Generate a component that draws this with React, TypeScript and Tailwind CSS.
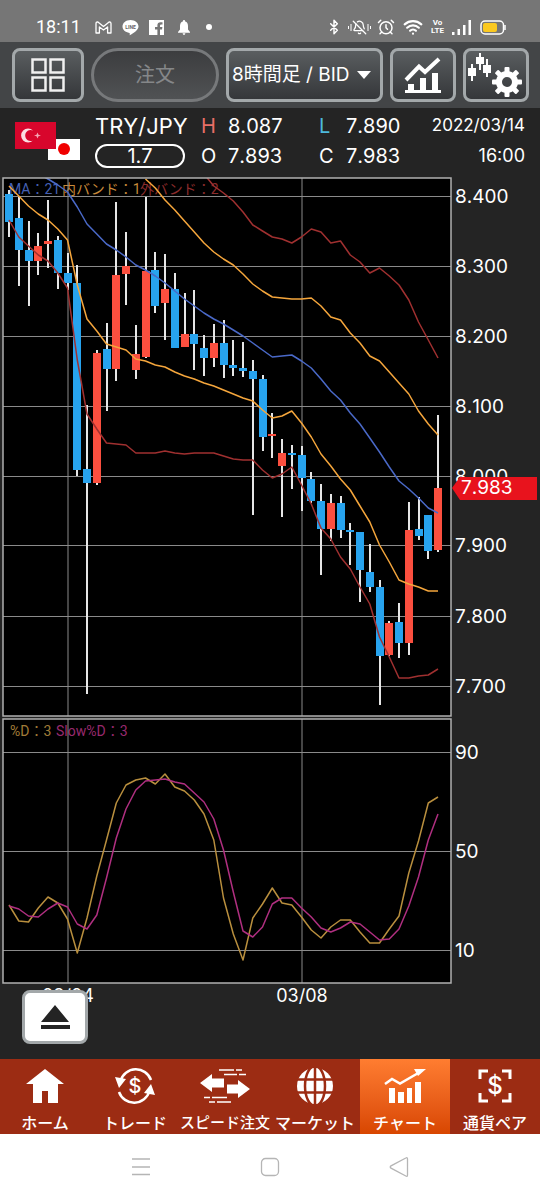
import type { ReactNode } from "react";
import { AlarmClock, BellOff, Bluetooth, Wifi } from "lucide-react";

const FIRST_X = 9;
const LAST_X = 438;
const COUNT = 45;

const RED = "#fb4f3f";
const BLUE = "#27a3ee";

type Candle = [high: number, top: number, bottom: number, low: number, up: boolean];

// high, body top, body bottom, low, rising
const CANDLES: Candle[] = [
  [190, 194, 222, 237, false],
  [197, 218, 250, 286, false],
  [221, 250, 261, 306, false],
  [233, 246, 261, 275, true],
  [200, 241, 244, 268, true],
  [236, 240, 273, 289, false],
  [253, 273, 283, 290, false],
  [265, 283, 470, 476, false],
  [405, 469, 483, 694, false],
  [350, 353, 483, 485, true],
  [323, 349, 369, 411, false],
  [202, 275, 369, 381, true],
  [232, 266, 274, 305, true],
  [325, 354, 370, 379, true],
  [197, 271, 357, 358, true],
  [252, 270, 306, 313, false],
  [254, 289, 303, 340, true],
  [273, 289, 348, 348, false],
  [293, 334, 347, 347, true],
  [290, 334, 344, 370, false],
  [335, 348, 358, 376, false],
  [324, 343, 358, 367, true],
  [320, 343, 365, 378, false],
  [340, 365, 368, 376, false],
  [342, 368, 371, 377, false],
  [360, 371, 379, 515, false],
  [375, 379, 437, 451, false],
  [413, 434, 436, 458, true],
  [439, 453, 466, 517, true],
  [445, 453, 455, 489, false],
  [446, 455, 478, 511, false],
  [472, 479, 501, 503, false],
  [484, 501, 529, 575, false],
  [494, 503, 529, 541, true],
  [496, 503, 530, 538, false],
  [523, 530, 532, 565, false],
  [532, 532, 570, 602, false],
  [544, 572, 587, 592, false],
  [580, 587, 656, 705, false],
  [621, 623, 655, 656, true],
  [603, 622, 643, 658, false],
  [502, 530, 643, 655, true],
  [497, 529, 536, 540, false],
  [515, 515, 551, 559, false],
  [415, 488, 550, 552, true],
];

type Series = { color: string; from?: number; ys: number[] };

const BANDS: Series[] = [
  {
    color: "#a03030",
    from: 20,
    ys: [174, 186, 193, 201, 212, 225, 231, 237, 239, 243, 237, 229, 232, 243, 241, 255, 262, 273, 268, 276, 285, 300, 322, 340, 358],
  },
  {
    color: "#a03030",
    ys: [
      220, 237, 246, 255, 261, 273, 288, 360, 414, 429, 443, 444, 445, 453, 453, 453, 451, 453, 454, 453, 453, 453, 456,
      459, 460, 460, 470, 478, 474, 467, 485, 504, 528, 539, 557, 569, 587, 604, 637, 657, 678, 678, 676, 675, 669,
    ],
  },
  {
    color: "#f5a63c",
    from: 14,
    ys: [
      179, 188, 200, 210, 221, 232, 243, 252, 259, 265, 274, 284, 291, 297, 298, 299, 299, 298, 306, 317, 320, 333, 343,
      356, 361, 372, 383, 394, 411, 424, 435,
    ],
  },
  {
    color: "#f5a63c",
    ys: [
      186, 196, 206, 214, 220, 229, 240, 285, 319, 331, 344, 347, 350, 359, 361, 365, 367, 372, 376, 379, 383, 386, 390,
      394, 398, 401, 410, 418, 416, 411, 423, 437, 454, 466, 479, 490, 506, 522, 545, 562, 580, 584, 587, 591, 591,
    ],
  },
  {
    color: "#4a69c8",
    from: 3,
    ys: [
      174, 179, 185, 192, 207, 224, 234, 244, 250, 257, 265, 270, 276, 283, 291, 299, 306, 313, 319, 324, 330, 336, 343,
      350, 357, 356, 355, 361, 368, 379, 391, 400, 413, 424, 438, 452, 467, 481, 489, 498, 508, 513,
    ],
  },
];

const STOCHASTICS: Series[] = [
  {
    color: "#b98f3e",
    ys: [
      905, 921, 922, 908, 897, 903, 919, 953, 918, 876, 840, 803, 785, 780, 778, 784, 774, 787, 791, 800, 814, 840, 898,
      934, 960, 918, 904, 888, 903, 905, 917, 930, 938, 927, 920, 920, 932, 943, 943, 929, 916, 873, 841, 803, 797,
    ],
  },
  {
    color: "#b02f80",
    ys: [
      906, 909, 916, 917, 909, 903, 907, 924, 929, 915, 878, 838, 809, 790, 781, 780, 779, 782, 784, 793, 802, 819, 850,
      892, 931, 937, 927, 904, 898, 898, 908, 917, 928, 932, 928, 922, 924, 932, 940, 939, 929, 906, 877, 840, 814,
    ],
  },
];

const PRICE_TICKS = [
  { y: 196, label: "8.400" },
  { y: 266, label: "8.300" },
  { y: 336, label: "8.200" },
  { y: 406, label: "8.100" },
  { y: 476, label: "8.000" },
  { y: 545, label: "7.900" },
  { y: 616, label: "7.800" },
  { y: 686, label: "7.700" },
];

const OSC_TICKS = [
  { y: 752, label: "90" },
  { y: 851, label: "50" },
  { y: 950, label: "10" },
];

const DATE_TICKS = [
  { x: 68, label: "03/04" },
  { x: 302, label: "03/08" },
];

function xAt(i: number) {
  return FIRST_X + ((LAST_X - FIRST_X) * i) / (COUNT - 1);
}

function Line({ series }: { series: Series }) {
  const from = series.from ?? 0;
  const points = series.ys.map((y, i) => `${xAt(from + i).toFixed(1)},${y}`).join(" ");
  return <polyline points={points} fill="none" stroke={series.color} strokeWidth="1.5" strokeLinejoin="round" />;
}

function Chart() {
  return (
    <svg
      viewBox="0 177 540 882"
      className="block w-full font-['Inter','Noto_Sans_CJK_JP',sans-serif]"
      role="img"
      aria-label="TRY/JPY 8時間足"
    >
      <defs>
        <clipPath id="price-clip">
          <rect x="3" y="178" width="449" height="538" />
        </clipPath>
      </defs>

      <rect x="3" y="178" width="448" height="538" fill="#000" />
      <rect x="3" y="719" width="448" height="264" fill="#000" />

      <g fontSize="14" className="font-['Roboto','Noto_Sans_CJK_JP',sans-serif]">
        <text x="9" y="194" fill="#4560b4">MA：21</text>
        <text x="62" y="194" fill="#c98a3a">内バンド：1</text>
        <text x="140" y="194" fill="#8c2c2c">外バンド：2</text>
        <text x="10" y="736" fill="#a07c38">%D：3</text>
        <text x="56" y="736" fill="#98296e">Slow%D：3</text>
      </g>

      <g stroke="#8a8a8a" strokeWidth="1">
        {[...PRICE_TICKS, ...OSC_TICKS].map((t) => (
          <line key={t.y} x1="3" x2="451" y1={t.y + 0.5} y2={t.y + 0.5} />
        ))}
        {DATE_TICKS.map((t) => (
          <path key={t.x} d={`M${t.x} 178V716M${t.x} 719V983`} />
        ))}
      </g>

      <g clipPath="url(#price-clip)">
        {CANDLES.map(([high, top, bottom, low, up], i) => {
          const x = Math.round(xAt(i));
          return (
            <g key={i}>
              <rect x={x - 1} y={high} width="2" height={low - high} fill="#e6e6e6" />
              <rect x={x - 4} y={top} width="8" height={bottom - top} fill={up ? RED : BLUE} />
            </g>
          );
        })}
        {BANDS.map((s, i) => (
          <Line key={i} series={s} />
        ))}
      </g>
      {STOCHASTICS.map((s) => (
        <Line key={s.color} series={s} />
      ))}

      <g fill="none" stroke="#b0b0b0" strokeWidth="1.5">
        <rect x="3" y="178" width="448" height="538" />
        <rect x="3" y="719" width="448" height="264" />
      </g>

      <g fill="#fff" fontSize="19" className="[font-kerning:none]">
        {[...PRICE_TICKS, ...OSC_TICKS].map((t) => (
          <text key={t.y} x="455" y={t.y + 7}>
            {t.label}
          </text>
        ))}
        {DATE_TICKS.map((t) => (
          <text key={t.x} x={t.x} y="1002" fontSize="18" textAnchor="middle">
            {t.label}
          </text>
        ))}
      </g>

      <path d="M452 488 460 477H537V500H460Z" fill="#e8131d" />
      <text x="461" y="494" fontSize="19" fill="#fff" className="[font-kerning:none]">
        7.983
      </text>
    </svg>
  );
}

function StatusBar() {
  return (
    <div className="flex h-[42px] items-end justify-between bg-[#767676] pr-[34px] pb-[5px] pl-9 text-white">
      <div className="flex items-center">
        <span className="w-[59px] font-['Roboto',sans-serif] text-lg leading-5">18:11</span>
        <svg width="17" height="13" viewBox="0 0 17 13" fill="none" stroke="#fff" strokeWidth="1.3" aria-hidden="true">
          <path d="M1 12V2.5Q1 .8 2.6.8L8.5 5.5 14.4.8Q16 .8 16 2.5V12H12.6V6L8.5 9 4.4 6V12Z" strokeLinejoin="round" />
        </svg>
        <svg width="17" height="17" viewBox="0 0 17 17" className="ml-2.5" aria-hidden="true">
          <path d="M8.5 1C4 1 .5 3.9.5 7.5c0 3.3 2.8 5.8 6.9 6.4.6.1.3 1.1.3 2.3 3.8-1.8 8.8-5.2 8.8-8.7C16.5 3.9 13 1 8.5 1Z" fill="#fff" />
          <text x="8.5" y="9.5" fontSize="5" fontWeight="700" textAnchor="middle" fill="#666" className="font-['Roboto',sans-serif]">
            LINE
          </text>
        </svg>
        <svg width="15" height="15" viewBox="0 0 15 15" className="ml-2.5" aria-hidden="true">
          <path d="M0 0H15V15H11V9.5h2l.4-2.5H11V5.7Q11 4.5 12.2 4.5H13.5V2.2H11.5Q8.4 2.2 8.4 5.3V7H6V9.5H8.4V15H0Z" fill="#fff" />
        </svg>
        <svg width="12" height="15" viewBox="0 0 12 15" className="ml-3.5" aria-hidden="true">
          <path d="M6 0Q7.2 0 7.2 1.4 10 2.3 10 6V9.5L12 12V12.7H0V12L2 9.5V6Q2 2.3 4.8 1.4 4.8 0 6 0ZM4.6 13.3H7.4Q7.2 15 6 15T4.6 13.3Z" fill="#fff" />
        </svg>
        <span className="ml-4 size-1.5 rounded-full bg-white" />
      </div>

      <div className="flex items-center">
        <Bluetooth width={16} height={18} strokeWidth={2.2} aria-hidden />
        <span className="ml-1.5 flex items-center">
          <svg width="4" height="9" viewBox="0 0 4 9" stroke="#fff" aria-hidden="true">
            <path d="M.5 3V6M3 1V8" />
          </svg>
          <BellOff className="size-[15px]" strokeWidth={2} aria-hidden />
          <svg width="4" height="9" viewBox="0 0 4 9" stroke="#fff" aria-hidden="true">
            <path d="M3.5 3V6M1 1V8" />
          </svg>
        </span>
        <AlarmClock className="ml-1.5 size-[18px]" strokeWidth={2} aria-hidden />
        <Wifi className="ml-2 size-[20px]" strokeWidth={2.6} aria-hidden />
        <span className="ml-2 flex flex-col items-center font-['Roboto',sans-serif] text-[8px] leading-[8px] font-bold">
          <span>Vo</span>
          <span>LTE</span>
        </span>
        <svg width="20" height="16" viewBox="0 0 20 16" className="ml-2" aria-hidden="true">
          <path d="M0 13H2.5V16H0ZM5.5 10H8V16H5.5ZM11 6H13.5V16H11ZM16.5 1H19V16H16.5Z" fill="#fff" />
        </svg>
        <svg width="26" height="15" viewBox="0 0 26 15" className="ml-2" aria-hidden="true">
          <rect x="1" y="1" width="22.5" height="13" rx="4" fill="none" stroke="#fff" strokeWidth="1.5" />
          <rect x="3" y="3" width="14" height="9" rx="2" fill="#fbc920" />
          <path d="M25 5V10" stroke="#fff" strokeWidth="1.5" />
        </svg>
      </div>
    </div>
  );
}

const TOOL_BUTTON =
  "flex h-[54px] items-center justify-center rounded-lg border-[3px] border-[#a3a8aa] bg-linear-to-b from-[#5a5e60] to-[#35373a] text-white";

function Toolbar() {
  return (
    <div className="grid h-[66px] grid-cols-[72fr_128fr_157fr_66fr_66fr] items-center gap-[7px] bg-[#434547] pr-[11px] pl-3">
      <button type="button" className={TOOL_BUTTON} aria-label="一覧">
        <svg width="36" height="36" viewBox="0 0 36 36" fill="none" stroke="#f0f0f0" strokeWidth="2.5" aria-hidden="true">
          <path d="M2.5 2.5H15.5V15.5H2.5ZM20.5 2.5H33.5V15.5H20.5ZM2.5 20.5H15.5V33.5H2.5ZM20.5 20.5H33.5V33.5H20.5Z" />
        </svg>
      </button>
      <button
        type="button"
        disabled
        className="h-[54px] rounded-full border-[3px] border-[#77797b] bg-linear-to-b from-[#3c3d3f] to-[#505254] text-xl text-[#858789]"
      >
        注文
      </button>
      <div className="relative">
        <select
          aria-label="足種"
          className={`${TOOL_BUTTON} w-full appearance-none pl-[3px] text-[19px]`}
          defaultValue="8h"
        >
          <option value="8h">8時間足 / BID</option>
        </select>
        <svg width="14" height="8" viewBox="0 0 14 8" className="pointer-events-none absolute top-[23px] right-3" aria-hidden="true">
          <path d="M0 0H14L7 8Z" fill="#fff" />
        </svg>
      </div>
      <button type="button" className={TOOL_BUTTON} aria-label="テクニカル">
        <svg width="38" height="38" viewBox="0 0 38 38" aria-hidden="true">
          <path d="M2 24 15 10.5 21 16 35 3" fill="none" stroke="#fff" strokeWidth="4" />
          <path d="M1 34H4V28H10V34H16V22H22V34H28V17H34V34H37V37H1Z" fill="#fff" />
        </svg>
      </button>
      <button type="button" className={TOOL_BUTTON} aria-label="チャート設定">
        <svg width="58" height="46" viewBox="0 0 58 46" className="shrink-0" aria-hidden="true">
          <g fill="#fff">
            <path d="M4 12H6V16H9V24H6V29H4V24H1V16H4ZM12 1H14V5H17V12H14V18H12V12H9V5H12ZM19 7H21V13H24V21H21V25H19V21H16V13H19Z" />
            {[0, 45, 90, 135, 180, 225, 270, 315].map((a) => (
              <rect key={a} x="37.5" y="15" width="5" height="8" rx="1" transform={`rotate(${a} 40 30)`} />
            ))}
          </g>
          <circle cx="40" cy="30" r="8" fill="none" stroke="#fff" strokeWidth="6" />
        </svg>
      </button>
    </div>
  );
}

function Flags() {
  return (
    <svg width="65" height="39" viewBox="0 0 65 39" aria-hidden="true">
      <rect x="33" y="17" width="32" height="21" fill="#fff" />
      <circle cx="49" cy="27" r="6" fill="#f00000" />
      <rect width="41" height="27" fill="#d8062c" />
      <path d="M18 8.5A7 7 0 1 0 18 18.5 5.5 5.5 0 1 1 18 8.5Z" fill="#fbdde2" />
      <path d="M22.5 10.5 23.5 12.8 26 13.5 23.5 14.3 22.5 16.5 21.5 14.3 19 13.5 21.5 12.8Z" fill="#f3a5b3" />
    </svg>
  );
}

function PriceInfo() {
  return (
    <div className="grid h-[69px] grid-cols-[80px_106px_27px_91px_27px_1fr_auto] items-center gap-y-0.5 pt-1 pr-[15px] pb-[9px] pl-[15px] text-xl text-white [font-kerning:none]">
      <div className="row-span-2">
        <Flags />
      </div>
      <span className="text-[22px] leading-7 whitespace-nowrap">TRY/JPY</span>
      <span className="text-[#e66f67]">H</span>
      <span>8.087</span>
      <span className="text-[#4db9dc]">L</span>
      <span>7.890</span>
      <span className="text-right text-[17px]">2022/03/14</span>
      <span className="flex h-6 w-[90px] items-center justify-center rounded-full border-2 border-white leading-5">1.7</span>
      <span>O</span>
      <span>7.893</span>
      <span>C</span>
      <span>7.983</span>
      <span className="text-right text-lg">16:00</span>
    </div>
  );
}

function DollarIcon({ children, size }: { children: ReactNode; size: number }) {
  return (
    <svg width="40" height="36" viewBox="0 0 40 36" fill="none" stroke="#fff" aria-hidden="true">
      {children}
      <text x="20" y={size === 24 ? 26 : 25} fontSize={size} fontWeight="500" textAnchor="middle" fill="#fff" stroke="none">
        $
      </text>
    </svg>
  );
}

const TABS = [
  {
    label: "ホーム",
    icon: (
      <svg width="38" height="34" viewBox="0 0 38 34" fill="#fff" aria-hidden="true">
        <path d="M19 0 38 15H32V34H22V22H16V34H7V15H0Z" />
      </svg>
    ),
  },
  {
    label: "トレード",
    icon: (
      <DollarIcon size={20}>
        <path d="M5.5 13A16 16 0 0 1 36 12M34.5 23A16 16 0 0 1 4 24" strokeWidth="2.5" />
        <path d="M0 9 11 11 4 20ZM40 27 29 25 36 16Z" fill="#fff" stroke="none" />
      </DollarIcon>
    ),
  },
  {
    label: "スピード注文",
    small: true,
    icon: (
      <svg width="50" height="34" viewBox="0 0 50 34" aria-hidden="true">
        <path d="M0 14 12 5V9.5H24V18.5H12V23ZM50 20 38 11V15.5H27V24.5H38V29Z" fill="#fff" />
        <path d="M19 1H34M36 1H42M24 5.5H37M39 5.5H46M4 28.5H10M12 28.5H27M9 33H15M17 33H31" stroke="#fff" strokeWidth="1.5" />
      </svg>
    ),
  },
  {
    label: "マーケット",
    icon: (
      <svg width="36" height="36" viewBox="0 0 36 36" aria-hidden="true">
        <circle cx="18" cy="18" r="18" fill="#fff" />
        <g fill="none" stroke="#9c2c13" strokeWidth="2.5">
          <path d="M0 11.5H36M0 24.5H36M18 0V36" />
          <ellipse cx="18" cy="18" rx="10" ry="20" />
        </g>
      </svg>
    ),
  },
  {
    label: "チャート",
    active: true,
    icon: (
      <svg width="42" height="34" viewBox="0 0 42 34" aria-hidden="true">
        <path d="M1 15 8 10 16 14.5 36 3" fill="none" stroke="#fff" strokeWidth="2.5" />
        <path d="M30 0H42L34 7ZM5 19H11V34H5ZM14 23H20V34H14ZM23 19H28V34H23ZM31 13H37V34H31Z" fill="#fff" />
      </svg>
    ),
  },
  {
    label: "通貨ペア",
    icon: (
      <DollarIcon size={24}>
        <path d="M5 11V3H13M27 3H35V11M35 25V33H27M13 33H5V25" strokeWidth="3" />
      </DollarIcon>
    ),
  },
];

function TabBar() {
  return (
    <nav className="grid h-[75px] grid-cols-6 bg-[#9c2c13] text-white">
      {TABS.map((tab) => (
        <a
          key={tab.label}
          href="#"
          aria-current={tab.active ? "page" : undefined}
          className={`flex min-w-0 flex-col items-center pt-[7px] ${
            tab.active ? "bg-linear-to-b from-[#ff7d30] to-[#d84600]" : ""
          }`}
        >
          <span className="flex h-10 items-center">{tab.icon}</span>
          <span className={`pt-[7px] leading-5 font-medium whitespace-nowrap ${tab.small ? "text-[15px]" : "text-base leading-5"}`}>
            {tab.label}
          </span>
        </a>
      ))}
    </nav>
  );
}

function SystemNav() {
  return (
    <div className="flex h-[66px] items-center justify-center gap-[109px] bg-white">
      <button type="button" aria-label="メニュー">
        <svg width="20" height="20" viewBox="0 0 20 20" stroke="#b5b5b5" strokeWidth="1.3" aria-hidden="true">
          <path d="M1 2H19M1 10H19M1 17.5H19" />
        </svg>
      </button>
      <button type="button" aria-label="ホーム画面">
        <svg width="20" height="20" viewBox="0 0 20 20" fill="none" stroke="#b5b5b5" strokeWidth="1.3" aria-hidden="true">
          <rect x="1.5" y="1.5" width="17" height="17" rx="4" />
        </svg>
      </button>
      <button type="button" aria-label="戻る">
        <svg width="20" height="20" viewBox="0 0 20 20" fill="none" stroke="#b5b5b5" strokeWidth="1.3" aria-hidden="true">
          <path d="M18.5 2V18Q18.5 20 16.8 19L2 11.2Q.5 10 2 8.8L16.8 1Q18.5 0 18.5 2Z" />
        </svg>
      </button>
    </div>
  );
}

export default function App() {
  return (
    <div className="bg-[#242424] font-['Inter','Noto_Sans_CJK_JP',sans-serif]">
      <StatusBar />
      <Toolbar />
      <PriceInfo />
      <main className="relative">
        <Chart />
        <button
          type="button"
          aria-label="パネルを開く"
          className="absolute bottom-[15px] left-[22px] flex h-[54px] w-[66px] items-center justify-center rounded-lg border-[3px] border-[#a3a8aa] bg-white"
        >
          <svg width="30" height="24" viewBox="0 0 30 24" fill="#242424" aria-hidden="true">
            <path d="M15 0 29 17H1ZM1 20H30V24H1Z" />
          </svg>
        </button>
      </main>
      <TabBar />
      <SystemNav />
    </div>
  );
}
